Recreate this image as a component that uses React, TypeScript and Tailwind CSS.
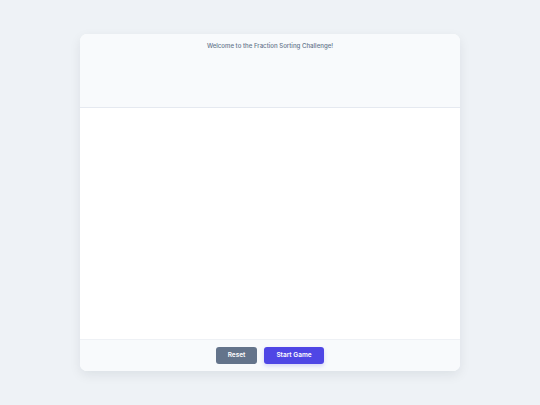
export default function App() {
  return (
    <div className="min-h-[405px] w-full bg-[#eef2f6] flex items-center justify-center font-['Inter','Liberation_Sans',sans-serif]">
      <div className="w-[380px] h-[337px] bg-white rounded-[7px] shadow-[0_4px_12px_rgba(15,23,42,0.08)] overflow-hidden flex flex-col">
        {/* Header */}
        <div className="h-[74px] shrink-0 bg-[#f8fafc] border-b border-[#e5e9f0] pt-[8px] text-center">
          <p className="text-[6.1px] font-medium text-[#64748b] leading-[8px]">
            Welcome to the Fraction Sorting Challenge!
          </p>
        </div>

        {/* Play area */}
        <div className="flex-1 bg-white" />

        {/* Footer */}
        <div className="h-[32px] shrink-0 bg-[#f8fafc] border-t border-[#eef1f5] flex items-center justify-center gap-[7px]">
          <button className="w-[41px] h-[17px] rounded-[3px] bg-[#64748b] text-white text-[6.5px] font-semibold">
            Reset
          </button>
          <button className="w-[60px] h-[17px] rounded-[3px] bg-[#4f46e5] text-white text-[6.5px] font-semibold shadow-[0_2px_4px_rgba(79,70,229,0.2)]">
            Start Game
          </button>
        </div>
      </div>
    </div>
  )
}
